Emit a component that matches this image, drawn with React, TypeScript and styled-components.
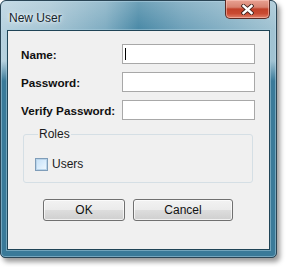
import React from "react";
import styled, { createGlobalStyle } from "styled-components";

const GlobalStyle = createGlobalStyle`
  html, body { margin: 0; padding: 0; background: #ffffff; }
  body { font-family: "Liberation Sans", Arial, sans-serif; }
`;

const Page = styled.div`
  width: 288px;
  height: 267px;
  background: #ffffff;
`;

const Window = styled.div`
  width: 277px;
  height: 258px;
  box-sizing: border-box;
  border: 1px solid #2a4555;
  border-radius: 6px 6px 5px 5px;
  display: flex;
  flex-direction: column;
  padding: 0 6px 7px 6px;
  background-color: #3a7a99;
  background-image:
    linear-gradient(180deg, rgba(255,255,255,0.2) 0px, rgba(255,255,255,0) 28px),
    linear-gradient(180deg, rgba(58,122,153,0) 0px, rgba(58,122,153,0) 60px, #3a7a99 80px),
    linear-gradient(90deg, #b7d2df 0%, #a6c5d4 18%, #80adc2 38%, #4b8aa7 50%, #70a2ba 66%, #8cb5c8 85%, #a3c4d3 100%);
  background-size: 100% 80px;
  background-repeat: no-repeat;
  box-shadow:
    inset 0 0 0 1px rgba(190, 220, 235, 0.45),
    3px 4px 5px rgba(0, 0, 0, 0.4);
`;

const TitleBar = styled.div`
  height: 29px;
  display: flex;
  align-items: flex-start;
  justify-content: space-between;
`;

const Title = styled.div`
  font-family: "Liberation Sans", Arial, sans-serif;
  font-size: 12px;
  color: #15242c;
  padding: 10px 0 0 2px;
  text-shadow: 0 0 6px rgba(255, 255, 255, 0.9), 0 0 3px rgba(255, 255, 255, 0.8);
`;

const CloseButton = styled.div`
  width: 45px;
  height: 19px;
  margin-top: -1px;
  box-sizing: border-box;
  border: 1px solid #5a2a24;
  border-top: none;
  border-radius: 0 0 5px 5px;
  display: flex;
  align-items: center;
  justify-content: center;
  background: linear-gradient(180deg, #e8a293 0%, #d88270 40%, #c1412a 50%, #c94a32 75%, #e0806a 100%);
  box-shadow: inset 0 0 0 1px rgba(255, 210, 200, 0.5);
`;

const Client = styled.div`
  flex: 1;
  box-sizing: border-box;
  background: #f0f0f0;
  border: 1px solid #1f4456;
  box-shadow: 0 0 0 1px rgba(170, 205, 222, 0.5);
  display: flex;
  flex-direction: column;
  padding: 13px 13px 0 13px;
`;

const Form = styled.div`
  display: grid;
  grid-template-columns: 101px 133px;
  grid-auto-rows: 20px;
  row-gap: 8px;
  align-items: center;
`;

const Label = styled.label`
  font-family: "Liberation Sans", Arial, sans-serif;
  font-weight: bold;
  font-size: 11.7px;
  color: #101010;
`;

const Field = styled.div<{ $focused?: boolean }>`
  height: 20px;
  box-sizing: border-box;
  border: 1px solid #a8a8a8;
  background: #ffffff;
  position: relative;
  &::after {
    content: "";
    display: ${(p) => (p.$focused ? "block" : "none")};
    position: absolute;
    left: 2px;
    top: 3px;
    width: 1px;
    height: 12px;
    background: #000000;
  }
`;

const Group = styled.fieldset`
  margin: 9px 3px 0 2px;
  padding: 14px 0 0 11px;
  height: 54px;
  box-sizing: border-box;
  border: 1px solid #d5dfe5;
  border-radius: 3px;
  min-width: 0;
`;

const Legend = styled.legend`
  font-family: "Liberation Sans", Arial, sans-serif;
  font-size: 12px;
  color: #1a1a1a;
  padding: 0 1px;
  margin-left: 3px;
  line-height: 10px;
`;

const CheckRow = styled.div`
  display: flex;
  align-items: center;
  gap: 4px;
  margin-top: 4px;
`;

const CheckBox = styled.div`
  width: 13px;
  height: 13px;
  box-sizing: border-box;
  border: 1px solid #7f9db9;
  background: linear-gradient(135deg, #c6e0f6 0%, #d9ecfc 50%, #f2f8fd 100%);
  box-shadow: inset 0 0 0 1px #b9d4ea;
`;

const CheckLabel = styled.span`
  font-family: "Liberation Sans", Arial, sans-serif;
  font-size: 12px;
  color: #1a1a1a;
`;

const Buttons = styled.div`
  display: flex;
  gap: 8px;
  margin: 16px 0 0 22px;
`;

const Button = styled.button<{ $w: number }>`
  width: ${(p) => p.$w}px;
  height: 22px;
  box-sizing: border-box;
  border: 1px solid #707070;
  border-radius: 3px;
  background: linear-gradient(180deg, #f2f2f2 0%, #ebebeb 48%, #dddddd 52%, #cfcfcf 100%);
  box-shadow: inset 0 0 0 1px rgba(255, 255, 255, 0.7);
  font-family: "Liberation Sans", Arial, sans-serif;
  font-size: 12px;
  color: #111111;
  padding: 0;
`;

export default function App() {
  return (
    <Page>
      <GlobalStyle />
      <Window>
        <TitleBar>
          <Title>New User</Title>
          <CloseButton>
            <svg width="13" height="11" viewBox="0 0 13 11">
              <path d="M2.5 2 L10.5 9 M10.5 2 L2.5 9" stroke="#3d1f1a" strokeWidth="4.2" strokeLinecap="square" />
              <path d="M2.5 2 L10.5 9 M10.5 2 L2.5 9" stroke="#ffffff" strokeWidth="2.4" strokeLinecap="square" />
            </svg>
          </CloseButton>
        </TitleBar>
        <Client>
          <Form>
            <Label>Name:</Label>
            <Field $focused />
            <Label>Password:</Label>
            <Field />
            <Label>Verify Password:</Label>
            <Field />
          </Form>
          <Group>
            <Legend>Roles</Legend>
            <CheckRow>
              <CheckBox />
              <CheckLabel>Users</CheckLabel>
            </CheckRow>
          </Group>
          <Buttons>
            <Button $w={82}>OK</Button>
            <Button $w={100}>Cancel</Button>
          </Buttons>
        </Client>
      </Window>
    </Page>
  );
}
